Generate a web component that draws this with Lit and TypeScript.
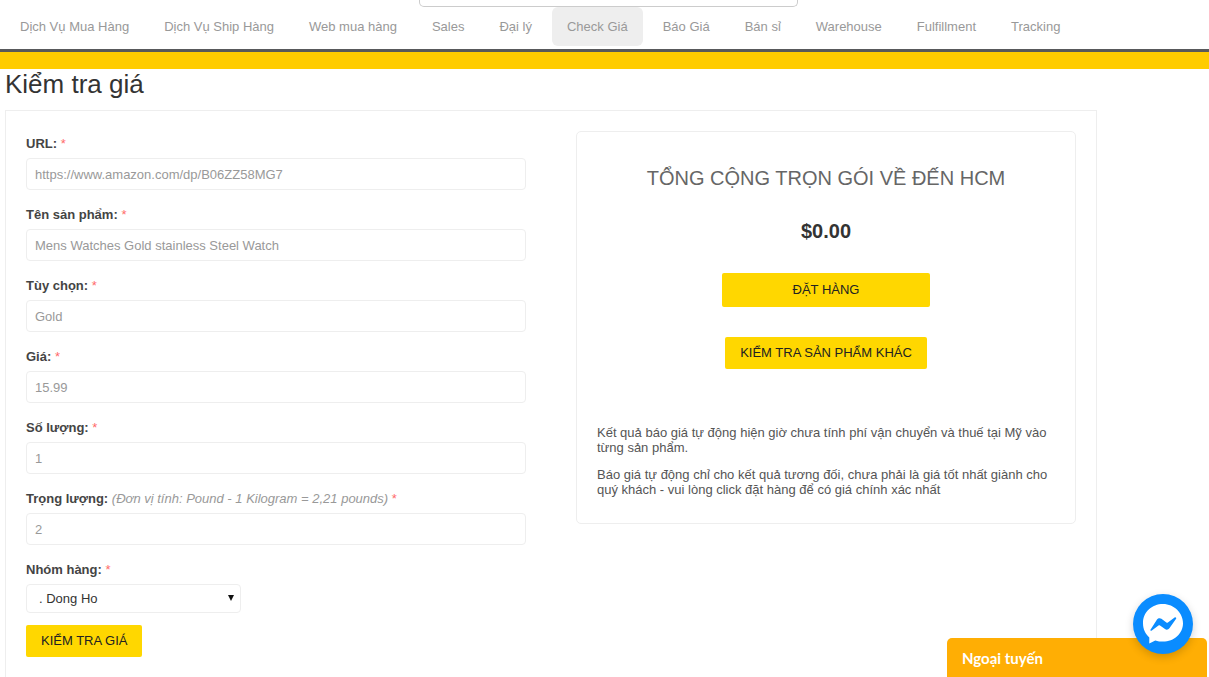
import { LitElement, html, css } from "lit";
import { customElement } from "lit/decorators.js";

const NAV = [
  "Dịch Vụ Mua Hàng",
  "Dịch Vụ Ship Hàng",
  "Web mua hàng",
  "Sales",
  "Đại lý",
  "Check Giá",
  "Báo Giá",
  "Bán sỉ",
  "Warehouse",
  "Fulfillment",
  "Tracking",
];

const FIELDS = [
  { label: "URL:", value: "https://www.amazon.com/dp/B06ZZ58MG7" },
  { label: "Tên sản phẩm:", value: "Mens Watches Gold stainless Steel Watch" },
  { label: "Tùy chọn:", value: "Gold" },
  { label: "Giá:", value: "15.99" },
  { label: "Số lượng:", value: "1" },
  { label: "Trọng lượng:", hint: "(Đơn vị tính: Pound - 1 Kilogram = 2,21 pounds)", value: "2" },
];

@customElement("app-root")
export class AppRoot extends LitElement {
  static styles = css`
    :host {
      display: block;
      position: relative;
      height: 677px;
      overflow: hidden;
      background: #fff;
      font-family: "Liberation Sans", Arial, sans-serif;
      font-size: 13px;
      color: #333;
    }

    .search-row {
      height: 7px;
      padding-left: 419px;
      box-sizing: border-box;
    }
    .search {
      width: 379px;
      height: 7px;
      box-sizing: border-box;
      border: 1px solid #ccc;
      border-top: none;
      border-radius: 0 0 5px 5px;
    }

    .nav {
      display: flex;
      gap: 5px;
      height: 42px;
      padding-left: 5px;
    }
    .nav a {
      height: 39px;
      padding: 0 15px;
      line-height: 39px;
      color: #999;
      border-radius: 6px;
    }
    .nav a.active {
      background: #eee;
    }

    .stripe {
      height: 17px;
      background: #fc0;
      border-top: 3px solid #58595b;
    }

    h1 {
      margin: 0;
      padding-left: 5px;
      height: 41px;
      font-size: 26px;
      font-weight: 400;
      line-height: 31px;
      color: #333;
    }

    .panel {
      width: 1092px;
      margin-left: 5px;
      box-sizing: border-box;
      border: 1px solid #eee;
      padding: 20px;
      display: flex;
      gap: 50px;
      align-items: flex-start;
    }

    .form {
      width: 500px;
    }
    .field {
      margin-bottom: 12px;
    }
    .label {
      display: block;
      height: 27px;
      line-height: 26px;
      font-weight: 700;
      color: #444;
    }
    .label em {
      font-weight: 400;
      color: #999;
    }
    .req {
      font-weight: 400;
      color: #f00;
      opacity: 0.6;
    }
    input {
      display: block;
      width: 100%;
      height: 32px;
      box-sizing: border-box;
      padding: 0 8px;
      border: 1px solid #eee;
      border-radius: 4px;
      font: inherit;
      color: #999;
      background: #fff;
      outline: none;
    }
    input::placeholder {
      color: #999;
    }
    .select-wrap {
      position: relative;
      width: 215px;
      height: 29px;
      margin-bottom: 12px;
    }
    select {
      display: block;
      width: 100%;
      height: 100%;
      box-sizing: border-box;
      padding: 0 8px 1px 12px;
      border: 1px solid #eee;
      border-radius: 4px;
      font: inherit;
      color: #333;
      background: #fff;
      appearance: none;
      -webkit-appearance: none;
    }
    .caret {
      position: absolute;
      left: 202px;
      top: 11px;
      width: 0;
      height: 0;
      border-left: 3px solid transparent;
      border-right: 3px solid transparent;
      border-top: 6px solid #111;
    }

    .btn {
      display: block;
      box-sizing: border-box;
      border: none;
      border-radius: 2px;
      background: #ffd700;
      color: #222;
      font: inherit;
      padding: 0 15px 2px;
      height: 32px;
    }

    .card {
      width: 500px;
      height: 393px;
      box-sizing: border-box;
      border: 1px solid #eee;
      border-radius: 5px;
      padding: 0 20px;
      color: #555;
      display: flex;
      flex-direction: column;
      align-items: center;
    }
    .card h2 {
      margin: 33px 0 0;
      font-size: 20px;
      font-weight: 400;
      line-height: 26px;
      color: #666;
    }
    .total {
      margin-top: 27px;
      font-size: 20px;
      font-weight: 700;
      line-height: 26px;
      color: #333;
    }
    .order {
      width: 208px;
      height: 34px;
      margin-top: 29px;
    }
    .other {
      margin-top: 30px;
    }
    .notes {
      align-self: stretch;
      margin-top: 56px;
    }
    .notes p {
      margin: 0 0 12px;
      line-height: 15px;
    }

    .chat {
      position: absolute;
      left: 947px;
      top: 638px;
      width: 260px;
      height: 60px;
      box-sizing: border-box;
      padding: 10px 15px;
      background: #ffae04;
      border-radius: 5px 5px 0 0;
      font-family: Lato, sans-serif;
      font-size: 15px;
      font-weight: 700;
      line-height: 20px;
      color: #fff;
    }
    .messenger {
      position: absolute;
      left: 1133px;
      top: 594px;
      width: 60px;
      height: 60px;
      border-radius: 50%;
      background: #0a8cff;
      box-shadow: 0 3px 8px rgba(0, 0, 0, 0.18);
      display: flex;
      align-items: center;
      justify-content: center;
    }
  `;

  render() {
    return html`
      <div class="search-row"><div class="search"></div></div>
      <nav class="nav">
        ${NAV.map(
          (item) => html`<a class=${item === "Check Giá" ? "active" : ""}>${item}</a>`
        )}
      </nav>
      <div class="stripe"></div>
      <h1>Kiểm tra giá</h1>
      <div class="panel">
        <div class="form">
          ${FIELDS.map(
            (f) => html`
              <div class="field">
                <label class="label">
                  ${f.label}
                  ${f.hint ? html`<em>${f.hint}</em>` : ""}
                  <span class="req">*</span>
                </label>
                <input placeholder=${f.value} />
              </div>
            `
          )}
          <label class="label">Nhóm hàng: <span class="req">*</span></label>
          <div class="select-wrap">
            <select><option>. Dong Ho</option></select>
            <span class="caret"></span>
          </div>
          <button class="btn">KIỂM TRA GIÁ</button>
        </div>
        <div class="card">
          <h2>TỔNG CỘNG TRỌN GÓI VỀ ĐẾN HCM</h2>
          <div class="total">$0.00</div>
          <button class="btn order">ĐẶT HÀNG</button>
          <button class="btn other">KIỂM TRA SẢN PHẨM KHÁC</button>
          <div class="notes">
            <p>Kết quả báo giá tự động hiện giờ chưa tính phí vận chuyển và thuế tại Mỹ vào từng sản phẩm.</p>
            <p>Báo giá tự động chỉ cho kết quả tương đối, chưa phải là giá tốt nhất giành cho quý khách - vui lòng click đặt hàng để có giá chính xác nhất</p>
          </div>
        </div>
      </div>
      <div class="chat">Ngoại tuyến</div>
      <div class="messenger">
        <svg width="40" height="40" viewBox="0 0 40 40">
          <path fill="#fff" d="M20 0C8.800 0 0 8.200 0 19.200c0 5.800 2.400 10.800 6.300 14.200v6.200l6-3.200c2.400.8 5 1.200 7.700 1.200 11.200 0 20-8.200 20-18.400S31.200 0 20 0z" />
          <path fill="#0a8cff" d="M7.800 25.200 14 15.600c1-1.500 3-1.900 4.400-.8l5 3.700c.5.300 1.100.3 1.500 0l6.700-5.100c.9-.7 2.100.4 1.500 1.300L26.400 24.300c-1 1.500-3 1.900-4.400.8l-5-3.700c-.5-.3-1.100-.3-1.500 0l-6.700 5.100c-.9.700-2.100-.4-1-1.300z" />
        </svg>
      </div>
    `;
  }
}
